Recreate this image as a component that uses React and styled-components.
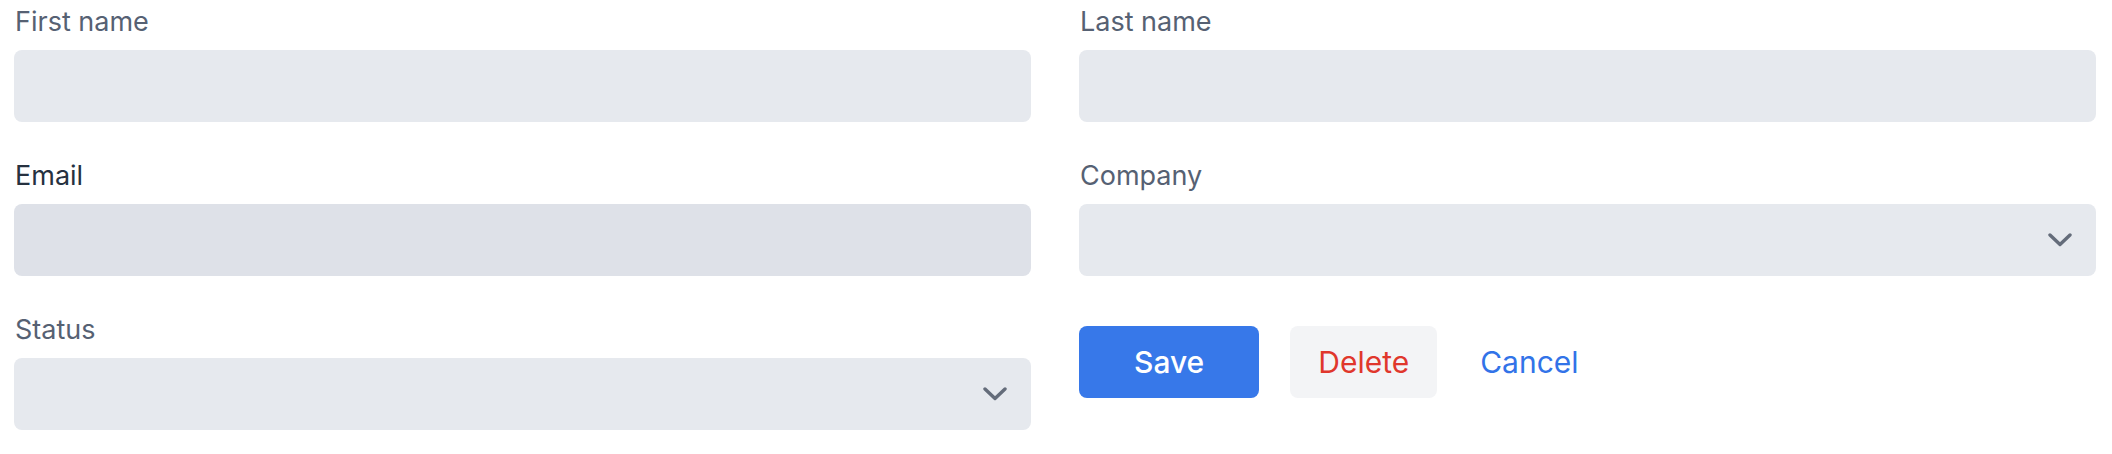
import React from 'react'
import styled, { createGlobalStyle } from 'styled-components'

const GlobalStyle = createGlobalStyle`
  body {
    margin: 0;
    background: #ffffff;
    font-family: Inter, 'Liberation Sans', sans-serif;
  }
`;

const Form = styled.form`
  display: grid;
  grid-template-columns: 1fr 1fr;
  column-gap: 48px;
  row-gap: 36px;
  padding: 4px 16px 0 14px;
`;

const Field = styled.div`
  display: flex;
  flex-direction: column;
`;

const Label = styled.label`
  font-size: 27px;
  line-height: 36px;
  height: 36px;
  margin-bottom: 10px;
  padding-left: 1px;
  color: ${p => (p.active ? '#263140' : '#566173')};
`;

const Input = styled.div`
  height: 72px;
  border-radius: 8px;
  background: ${p => (p.active ? '#dee1e8' : '#e6e9ee')};
`;

const Select = styled(Input)`
  display: flex;
  align-items: center;
  justify-content: flex-end;
  padding-right: 24px;
`;

const Actions = styled.div`
  display: flex;
  align-items: center;
  gap: 31px;
  margin-top: 14px;
  align-self: start;
`;

const Button = styled.button`
  height: 72px;
  border: 0;
  border-radius: 8px;
  font-family: Inter, 'Liberation Sans', sans-serif;
  font-size: 30px;
  font-weight: ${p => (p.primary ? 500 : 400)};
  padding: 0 ${p => p.pad}px;
  background: ${p => p.bg};
  color: ${p => p.fg};
  cursor: pointer;
`;

const Chevron = () => (
  <svg width="24" height="14" viewBox="0 0 24 14" fill="none">
    <polyline points="2,2 12,11.5 22,2" stroke="#646c7a" strokeWidth="3.4" strokeLinecap="round" strokeLinejoin="round" />
  </svg>
)

const App = () => (
  <>
    <GlobalStyle />
    <Form>
      <Field>
        <Label>First name</Label>
        <Input />
      </Field>
      <Field>
        <Label>Last name</Label>
        <Input />
      </Field>
      <Field>
        <Label active>Email</Label>
        <Input active />
      </Field>
      <Field>
        <Label>Company</Label>
        <Select><Chevron /></Select>
      </Field>
      <Field>
        <Label>Status</Label>
        <Select><Chevron /></Select>
      </Field>
      <Actions>
        <Button type="button" primary pad={55} bg="#3778e9" fg="#ffffff">Save</Button>
        <Button type="button" pad={28} bg="#f3f4f6" fg="#e0372c">Delete</Button>
        <Button type="button" pad={12} bg="transparent" fg="#3273e8">Cancel</Button>
      </Actions>
    </Form>
  </>
)

export default App
